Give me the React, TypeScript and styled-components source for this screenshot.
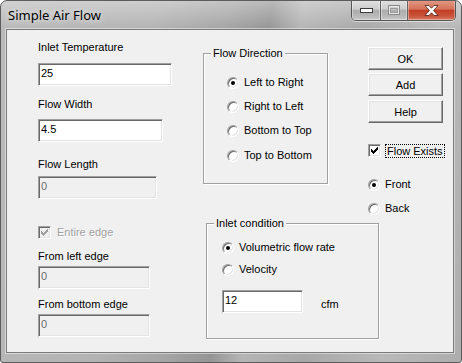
import React, { FC, ReactNode } from 'react'
import styled, { createGlobalStyle } from 'styled-components'

const GlobalStyle = createGlobalStyle`
  html, body {
    margin: 0;
    padding: 0;
    background: #ffffff;
  }
  body {
    font-family: 'Liberation Sans', Arial, sans-serif;
  }
`

const Window = styled.div`
  width: 462px;
  height: 363px;
  box-sizing: border-box;
  border: 1px solid #5c5c5c;
  border-radius: 7px 7px 3px 3px;
  overflow: hidden;
  display: flex;
  flex-direction: column;
  background:
    linear-gradient(to bottom, rgba(255, 255, 255, 0.35), rgba(255, 255, 255, 0) 28px),
    linear-gradient(
      100deg,
      #b9b9b9 0%,
      #b3b3b3 30%,
      #a4a4a4 44%,
      #959595 52%,
      #b5b5b5 58%,
      #a8a8a8 70%,
      #b9b9b9 85%,
      #adadad 100%
    );
`

const TitleBar = styled.div`
  height: 28px;
  display: flex;
  align-items: flex-start;
`

const Title = styled.div`
  height: 28px;
  display: flex;
  align-items: center;
  padding-left: 7px;
  font-family: 'Noto Sans', 'Open Sans', sans-serif;
  font-size: 13px;
  color: #000;
  text-shadow: 0 0 6px rgba(255, 255, 255, 0.9);
`

const CaptionGroup = styled.div`
  margin-left: auto;
  margin-right: 5px;
  margin-top: -1px;
  display: flex;
  height: 20px;
  border: 1px solid #555;
  border-top: none;
  border-radius: 0 0 5px 5px;
  overflow: hidden;
  box-shadow: 0 1px 0 rgba(255, 255, 255, 0.5);
`

const CaptionButton = styled.div<{ $w: number; $close?: boolean }>`
  width: ${({ $w }) => $w}px;
  height: 20px;
  display: flex;
  align-items: center;
  justify-content: center;
  box-shadow: inset 0 0 0 1px rgba(255, 255, 255, 0.35);
  background: ${({ $close }) =>
    $close
      ? 'linear-gradient(to bottom, #e39a88 0%, #d6735a 45%, #c03f25 52%, #c9533a 80%, #d77d64 100%)'
      : 'linear-gradient(to bottom, #e2e2e2 0%, #cdcdcd 45%, #adadad 52%, #b8b8b8 80%, #cacaca 100%)'};
  & + & {
    border-left: 1px solid #646464;
  }
`

const Client = styled.div`
  flex: 1;
  margin: 0 7px 9px 5px;
  border: 1px solid #7a7a7a;
  box-shadow: 0 0 0 1px rgba(255, 255, 255, 0.45);
  background: #f0f0f0;
  display: flex;
  font-size: 11px;
  color: #000;
`

const LeftCol = styled.div`
  width: 196px;
  box-sizing: border-box;
  padding-left: 31px;
  display: flex;
  flex-direction: column;
  align-items: flex-start;
`

const Label = styled.label<{ $mt: number }>`
  display: block;
  margin-top: ${({ $mt }) => $mt}px;
  line-height: 13px;
  white-space: nowrap;
`

const Edit = styled.input<{ $w: number; $mt?: number }>`
  display: block;
  margin: ${({ $mt }) => $mt ?? 0}px 0 0 0;
  width: ${({ $w }) => $w}px;
  height: 23px;
  box-sizing: border-box;
  padding: 0 2px 4px 2px;
  border: 1px solid;
  border-color: #a0a0a0 #ffffff #ffffff #a0a0a0;
  box-shadow: inset 1px 1px 0 #696969, inset -1px -1px 0 #e3e3e3;
  background: #ffffff;
  font-family: 'Liberation Sans', Arial, sans-serif;
  font-size: 11px;
  color: #000;
  outline: none;
  &:disabled {
    background: #f0f0f0;
    color: #6d6d6d;
  }
`

const RightArea = styled.div`
  display: flex;
  flex-direction: column;
`

const TopRow = styled.div`
  display: flex;
  align-items: flex-start;
  height: 184px;
`

const GroupBox = styled.div<{ $w: number; $h: number; $mt: number; $ml?: number }>`
  position: relative;
  width: ${({ $w }) => $w}px;
  height: ${({ $h }) => $h}px;
  margin-top: ${({ $mt }) => $mt}px;
  margin-left: ${({ $ml }) => $ml ?? 0}px;
  box-sizing: border-box;
  border: 1px solid #a0a0a0;
  box-shadow: inset 1px 1px 0 #ffffff, 1px 1px 0 #ffffff;
`

const GroupCaption = styled.span`
  position: absolute;
  top: -7px;
  left: 7px;
  padding: 0 2px;
  background: #f0f0f0;
  line-height: 13px;
  white-space: nowrap;
`

const GroupBody = styled.div<{ $pl: number; $pt: number }>`
  display: flex;
  flex-direction: column;
  align-items: flex-start;
  padding: ${({ $pt }) => $pt}px 0 0 ${({ $pl }) => $pl}px;
`

const ChoiceRow = styled.label<{ $mt?: number; $gap?: number; $disabled?: boolean }>`
  display: flex;
  align-items: center;
  height: 13px;
  gap: ${({ $gap }) => $gap ?? 5}px;
  margin-top: ${({ $mt }) => $mt ?? 0}px;
  line-height: 13px;
  white-space: nowrap;
  color: ${({ $disabled }) => ($disabled ? '#a0a0a0' : '#000')};
  text-shadow: ${({ $disabled }) => ($disabled ? '1px 1px 0 #ffffff' : 'none')};
`

const RadioDot = styled.span<{ $on?: boolean }>`
  width: 12px;
  height: 12px;
  box-sizing: border-box;
  border-radius: 50%;
  border: 1px solid;
  border-color: #a0a0a0 #ffffff #ffffff #a0a0a0;
  box-shadow: inset 1px 1px 0 #696969, inset -1px -1px 0 #e3e3e3;
  background: #ffffff;
  display: flex;
  align-items: center;
  justify-content: center;
  flex: none;
  &::after {
    content: '';
    width: 4px;
    height: 4px;
    border-radius: 50%;
    background: ${({ $on }) => ($on ? '#000' : 'transparent')};
  }
`

const CheckBox = styled.span<{ $disabled?: boolean }>`
  width: 13px;
  height: 13px;
  box-sizing: border-box;
  border: 1px solid;
  border-color: #a0a0a0 #ffffff #ffffff #a0a0a0;
  box-shadow: inset 1px 1px 0 #696969, inset -1px -1px 0 #e3e3e3;
  background: ${({ $disabled }) => ($disabled ? '#f0f0f0' : '#ffffff')};
  display: flex;
  align-items: center;
  justify-content: center;
  flex: none;
`

const FocusText = styled.span`
  border: 1px dotted #000;
  padding: 0 1px;
  line-height: 12px;
`

const RightCol = styled.div`
  width: 75px;
  margin-left: 40px;
  display: flex;
  flex-direction: column;
  align-items: flex-start;
`

const PushButton = styled.button<{ $mt: number }>`
  width: 75px;
  height: 23px;
  margin-top: ${({ $mt }) => $mt}px;
  box-sizing: border-box;
  padding: 0;
  border: 1px solid;
  border-color: #ffffff #696969 #696969 #ffffff;
  box-shadow: inset -1px -1px 0 #a0a0a0, inset 1px 1px 0 #e3e3e3;
  background: #f0f0f0;
  font-family: 'Liberation Sans', Arial, sans-serif;
  font-size: 11px;
  color: #000;
`

const EditRow = styled.div<{ $mt: number }>`
  display: flex;
  align-items: center;
  margin-top: ${({ $mt }) => $mt}px;
`

const Unit = styled.span`
  margin-left: 18px;
  margin-top: 5px;
`

const CheckMark: FC<{ color: string }> = ({ color }) => (
  <svg width="7" height="7" viewBox="0 0 7 7" shapeRendering="crispEdges">
    <path d="M0 2 L2 4 L6 0 L7 0 L7 3 L2 7 L0 5 Z" fill={color} />
  </svg>
)

const Radio: FC<{ on?: boolean; mt?: number; children: ReactNode }> = ({ on, mt, children }) => (
  <ChoiceRow $mt={mt}>
    <RadioDot $on={on} />
    <span>{children}</span>
  </ChoiceRow>
)

export default function App() {
  return (
    <>
      <GlobalStyle />
      <Window>
        <TitleBar>
          <Title>Simple Air Flow</Title>
          <CaptionGroup>
            <CaptionButton $w={28}>
              <svg width="13" height="5" viewBox="0 0 13 5">
                <rect x="0.5" y="0.5" width="12" height="4" fill="#fff" stroke="#3c3c3c" />
              </svg>
            </CaptionButton>
            <CaptionButton $w={26}>
              <svg width="12" height="10" viewBox="0 0 12 10">
                <rect x="0.5" y="0.5" width="11" height="9" fill="none" stroke="#8a8a8a" />
                <rect x="1.5" y="1.5" width="9" height="7" fill="none" stroke="#e8e8e8" />
                <rect x="2.5" y="3.5" width="7" height="4" fill="none" stroke="#9a9a9a" />
              </svg>
            </CaptionButton>
            <CaptionButton $w={47} $close>
              <svg width="15" height="11" viewBox="0 0 15 11">
                <path
                  d="M1 0.5 H5 L7.5 3.2 L10 0.5 H14 L9.6 5.5 L14 10.5 H10 L7.5 7.8 L5 10.5 H1 L5.4 5.5 Z"
                  fill="#ffffff"
                  stroke="#5a2a20"
                  strokeWidth="0.9"
                />
              </svg>
            </CaptionButton>
          </CaptionGroup>
        </TitleBar>
        <Client>
          <LeftCol>
            <Label $mt={11}>Inlet Temperature</Label>
            <Edit $w={134} $mt={9} defaultValue="25" />
            <Label $mt={12}>Flow Width</Label>
            <Edit $w={125} $mt={8} defaultValue="4.5" />
            <Label $mt={16}>Flow Length</Label>
            <Edit $w={119} $mt={5} defaultValue="0" disabled />
            <ChoiceRow $mt={27} $gap={6} $disabled>
              <CheckBox $disabled>
                <CheckMark color="#a0a0a0" />
              </CheckBox>
              <span>Entire edge</span>
            </ChoiceRow>
            <Label $mt={11}>From left edge</Label>
            <Edit $w={112} $mt={3} defaultValue="0" disabled />
            <Label $mt={9}>From bottom edge</Label>
            <Edit $w={112} $mt={3} defaultValue="0" disabled />
          </LeftCol>
          <RightArea>
            <TopRow>
              <GroupBox $w={125} $h={131} $mt={23}>
                <GroupCaption>Flow Direction</GroupCaption>
                <GroupBody $pl={23} $pt={22}>
                  <Radio on>Left to Right</Radio>
                  <Radio mt={11}>Right to Left</Radio>
                  <Radio mt={11}>Bottom to Top</Radio>
                  <Radio mt={12}>Top to Bottom</Radio>
                </GroupBody>
              </GroupBox>
              <RightCol>
                <PushButton $mt={17}>OK</PushButton>
                <PushButton $mt={3}>Add</PushButton>
                <PushButton $mt={4}>Help</PushButton>
                <ChoiceRow $mt={21} $gap={4}>
                  <CheckBox>
                    <CheckMark color="#000" />
                  </CheckBox>
                  <FocusText>Flow Exists</FocusText>
                </ChoiceRow>
                <Radio on mt={21}>
                  Front
                </Radio>
                <Radio mt={11}>Back</Radio>
              </RightCol>
            </TopRow>
            <GroupBox $w={173} $h={116} $mt={9} $ml={3}>
              <GroupCaption>Inlet condition</GroupCaption>
              <GroupBody $pl={15} $pt={17}>
                <Radio on>Volumetric flow rate</Radio>
                <Radio mt={9}>Velocity</Radio>
                <EditRow $mt={14}>
                  <Edit $w={81} defaultValue="12" />
                  <Unit>cfm</Unit>
                </EditRow>
              </GroupBody>
            </GroupBox>
          </RightArea>
        </Client>
      </Window>
    </>
  )
}
